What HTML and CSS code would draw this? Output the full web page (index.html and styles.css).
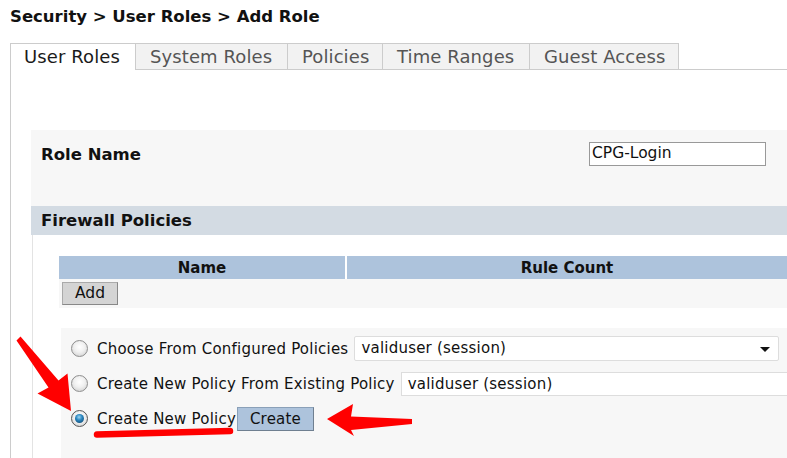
FILE: index.html
```html
<!DOCTYPE html>
<html>
<head>
<meta charset="utf-8">
<link rel="stylesheet" href="styles.css">
</head>
<body>
<h1 class="title">Security &gt; User Roles &gt; Add Role</h1>
<div class="tabs">
  <div class="tab active">User Roles</div>
  <div class="tab">System Roles</div>
  <div class="tab">Policies</div>
  <div class="tab">Time Ranges</div>
  <div class="tab">Guest Access</div>
  <div class="tab-fill"></div>
</div>
<div class="content">
  <div class="role-panel">
    <div class="role-label">Role Name</div>
    <div class="role-input">CPG-Login</div>
  </div>
  <div class="fw-header">Firewall Policies</div>
  <div class="fw-body">
    <div class="tbl-head">
      <div class="col-name">Name</div>
      <div class="col-count">Rule Count</div>
    </div>
    <div class="tbl-row">
      <div class="btn-add">Add</div>
    </div>
    <div class="choice-panel">
      <div class="choice">
        <span class="radio"></span>
        <span class="choice-text">Choose From Configured Policies</span>
        <div class="select">validuser (session)<span class="caret"></span></div>
      </div>
      <div class="choice">
        <span class="radio"></span>
        <span class="choice-text">Create New Policy From Existing Policy</span>
        <div class="field">validuser (session)</div>
      </div>
      <div class="choice">
        <span class="radio checked"></span>
        <span class="choice-text">Create New Policy</span>
        <div class="btn-create">Create</div>
      </div>
    </div>
  </div>
</div>
<svg class="marks" width="787" height="458" viewBox="0 0 787 458">
  <polygon fill="#f00" points="16.5,340.5 20.5,336.5 58.5,380.5 67.5,373.5 71,411 37.5,393.5 48.5,387.5"/>
  <path d="M97 434.5 L230 431" stroke="#f00" stroke-width="6.5" stroke-linecap="round" fill="none"/>
  <polygon fill="#f00" points="327,419 353,404 351,416.5 412,419 412,424 351,430 354,436"/>
</svg>
</body>
</html>
```
FILE: styles.css
```css
html, body {
  margin: 0;
  padding: 0;
  background: #fff;
  height: 458px;
  overflow: hidden;
}
body {
  font-family: "DejaVu Sans", Verdana, sans-serif;
  color: #111;
  position: relative;
}
.title {
  margin: 0;
  padding: 7px 0 0 10px;
  height: 36px;
  box-sizing: border-box;
  font-size: 16.5px;
  font-weight: bold;
  line-height: 19px;
  color: #111;
}
.tabs {
  display: flex;
  height: 27px;
  margin-top: 7px;
  padding-left: 10px;
}
.tab {
  box-sizing: border-box;
  height: 27px;
  padding: 0 14px;
  border: 1px solid #ccc;
  border-left: none;
  background: #f2f2f2;
  color: #555;
  font-size: 18px;
  letter-spacing: 0.1px;
  line-height: 26px;
  white-space: nowrap;
}
.tab.active {
  background: #fff;
  color: #1a1a1a;
  border-left: 1px solid #ccc;
  border-bottom: none;
  width: 126px;
  padding-left: 13px;
}
.tab:nth-child(2) { width: 152px; }
.tab:nth-child(3) { width: 95px; }
.tab:nth-child(4) { width: 147px; }
.tab:nth-child(5) { width: 149px; }
.tab-fill {
  flex: 1;
  border-bottom: 1px solid #ccc;
}
.content {
  margin-left: 10px;
  border-left: 1px solid #ccc;
  padding-top: 60px;
  padding-left: 20px;
  height: 328px;
}
.role-panel {
  background: #f7f7f7;
  height: 76px;
  display: flex;
  align-items: flex-start;
  justify-content: space-between;
  padding: 12px 21px 0 10px;
  box-sizing: border-box;
}
.role-label {
  font-weight: bold;
  font-size: 16.5px;
  line-height: 24px;
  padding-top: 1px;
}
.role-input {
  box-sizing: border-box;
  width: 177px;
  height: 24px;
  border: 1px solid #999;
  background: #fff;
  font-size: 15.5px;
  line-height: 21px;
  padding-left: 2px;
}
.fw-header {
  background: #d3dbe3;
  height: 29px;
  font-weight: bold;
  font-size: 16.5px;
  line-height: 29px;
  padding-left: 10px;
}
.fw-body {
  border-left: 1px solid #e3e3e3;
  margin-left: 1px;
  padding: 21px 0 0 26px;
}
.tbl-head {
  display: flex;
  height: 23px;
  gap: 2px;
}
.tbl-head > div {
  background: #adc3dc;
  font-weight: bold;
  font-size: 15px;
  line-height: 24px;
  text-align: center;
}
.col-name { width: 286px; }
.col-count { flex: 1; }
.tbl-row {
  background: #f7f7f7;
  height: 29px;
  padding: 3px 0 0 3px;
  box-sizing: border-box;
}
.btn-add {
  box-sizing: border-box;
  width: 56px;
  height: 23px;
  background: #d4d4d4;
  border: 1px solid #aaa;
  border-right-color: #888;
  border-bottom-color: #888;
  font-size: 15.5px;
  line-height: 21px;
  text-align: center;
}
.choice-panel {
  margin: 20px 0 0 2px;
  background: #f7f7f7;
  height: 140px;
  padding: 8px 0 0 10px;
  box-sizing: border-box;
  display: flex;
  flex-direction: column;
  gap: 10px;
}
.choice {
  display: flex;
  align-items: center;
  height: 25px;
}
.radio {
  box-sizing: border-box;
  width: 17px;
  height: 17px;
  border-radius: 50%;
  border: 1px solid #8e8e8e;
  background: radial-gradient(circle at 50% 40%, #fff 0%, #f0f0f0 45%, #c9c9c9 100%);
  margin-right: 9px;
  flex: none;
  position: relative;
}
.radio.checked {
  border-color: #555;
}
.radio.checked::after {
  content: "";
  position: absolute;
  left: 3px;
  top: 3px;
  width: 9px;
  height: 9px;
  border-radius: 50%;
  background: radial-gradient(circle at 45% 35%, #9fd6f2 0%, #2a86c0 40%, #0b3a5e 100%);
}
.choice-text {
  font-size: 15px;
  letter-spacing: 0.22px;
  white-space: nowrap;
  color: #111;
}
.select {
  box-sizing: border-box;
  margin-left: 6px;
  width: 425px;
  height: 25px;
  background: #fff;
  border: 1px solid #ddd;
  border-radius: 2px;
  font-size: 15px;
  letter-spacing: 0.22px;
  line-height: 23px;
  padding-left: 6px;
  position: relative;
}
.caret {
  position: absolute;
  right: 8px;
  top: 10px;
  width: 0;
  height: 0;
  border-left: 5px solid transparent;
  border-right: 5px solid transparent;
  border-top: 5px solid #111;
}
.field {
  box-sizing: border-box;
  margin-left: 6px;
  flex: 1;
  height: 24px;
  background: #fff;
  border: 1px solid #ddd;
  border-right: none;
  font-size: 15px;
  letter-spacing: 0.22px;
  line-height: 22px;
  padding-left: 6px;
}
.btn-create {
  box-sizing: border-box;
  width: 77px;
  height: 24px;
  background: #adc3dc;
  border: 1px solid #8aa0b8;
  border-right-color: #6f7f90;
  border-bottom-color: #6f7f90;
  font-size: 15px;
  letter-spacing: 0.22px;
  line-height: 22px;
  text-align: center;
  margin-left: 1px;
}
.marks {
  position: absolute;
  left: 0;
  top: 0;
  pointer-events: none;
}
```
